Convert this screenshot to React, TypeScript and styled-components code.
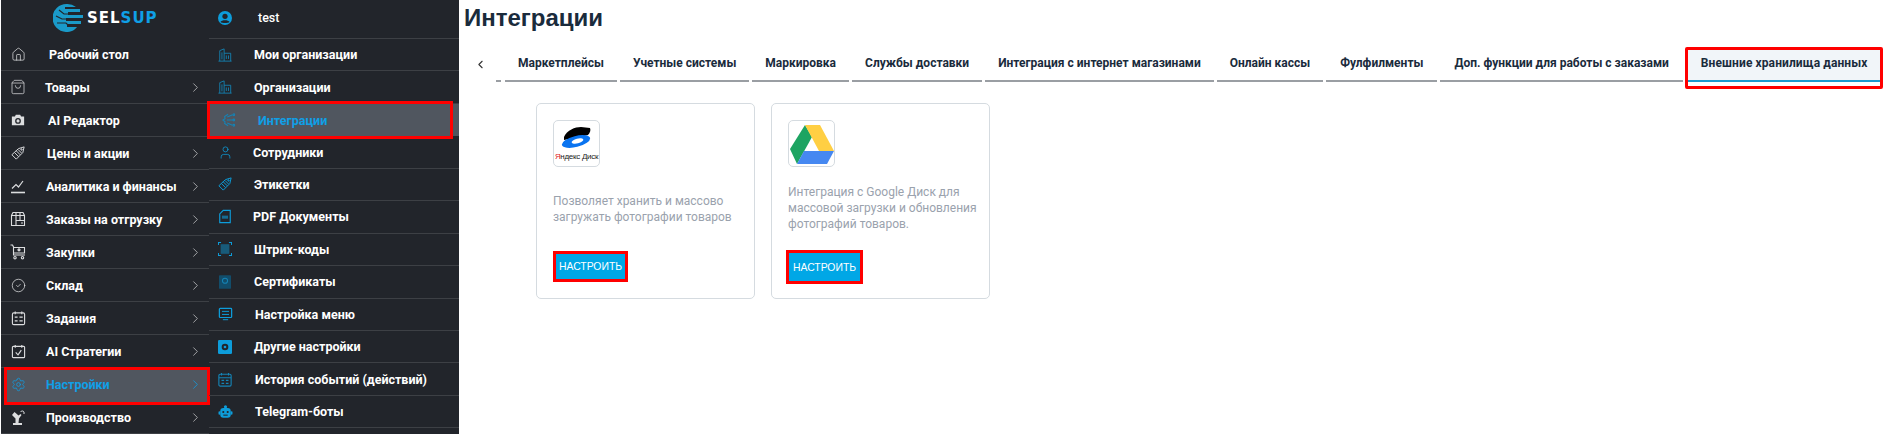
import React from 'react'
import styled, { createGlobalStyle } from 'styled-components'
import { ChevronLeft, ChevronRight, CircleCheck, House, Settings, ShoppingBag, User } from 'lucide-react'

const GlobalStyle = createGlobalStyle`
html, body {
  margin: 0;
  padding: 0;
  background: #fff;
  font-family: "Roboto", "Liberation Sans", sans-serif;
}
* {
  box-sizing: border-box;
}
`

const IconOrders = () => (
  <svg width="16" height="16" viewBox="0 0 16 16" fill="none" stroke="currentColor" strokeWidth="1.1">
    <path d="M3 1.5h10l1.5 3v10h-13v-10z" />
    <path d="M1.5 4.5h13M6 1.5v13M10 1.5v8M6 9.500h8.500" />
    <path d="M11 12h2" />
  </svg>
)
const IconChart = () => (
  <svg width="16" height="16" viewBox="0 0 16 16" fill="none" stroke="currentColor" strokeWidth="1.2">
    <path d="M2 10.500l4-4 2.500 2.500 4.500-6" />
    <path d="M1 14.500h14" strokeWidth="1.600" />
  </svg>
)
const IconCamera = () => (
  <svg width="14" height="14" viewBox="0 0 16 16">
    <path fill="currentColor" d="M1 4h3.500l1-2h5l1 2H15v10H1z" />
    <circle cx="8" cy="9" r="3.300" fill="#22252b" />
    <circle cx="8" cy="9" r="1.800" fill="currentColor" />
  </svg>
)
const IconCart = () => (
  <svg width="16" height="16" viewBox="0 0 16 16" fill="none" stroke="currentColor" strokeWidth="1.1">
    <path d="M0.500 1h2l1 2v8h11.500" />
    <path d="M3.500 3.500h11v5.500h-11M9 3.500v3.500M7.500 5.500L9 7l1.500-1.500" />
    <circle cx="5" cy="13.700" r="1.200" />
    <circle cx="12.500" cy="13.700" r="1.200" />
  </svg>
)
const IconTasks = () => (
  <svg width="15" height="16" viewBox="0 0 16 16" fill="none" stroke="currentColor" strokeWidth="1.2">
    <rect x="1.500" y="2.500" width="13" height="12.500" rx="1.500" />
    <path d="M4.500 1v3M11.500 1v3M4 7h3M9 7h3.500M4 11h3M9 11h3.500" />
  </svg>
)
const IconStrategy = () => (
  <svg width="15" height="15" viewBox="0 0 16 16" fill="none" stroke="currentColor" strokeWidth="1.2">
    <rect x="1.500" y="2.500" width="13" height="12" rx="1" />
    <path d="M4.500 1v3M11.500 1v3M5 9l2.500 2.500L11 6.500" />
  </svg>
)
const IconRobotArm = () => (
  <svg width="16" height="16" viewBox="0 0 16 16">
    <path fill="currentColor" d="M3 14h9v2H3zM5.500 14V9.500L2 6l2.500-3 4 3.500 2-1.500 1 1L9 9.500 8.500 14z" />
    <path fill="none" stroke="currentColor" d="M10.500 3a2 2 0 0 1 3.500 0v2" />
  </svg>
)
const IconUserRound = () => (
  <svg width="14" height="14" viewBox="0 0 16 16">
    <circle cx="8" cy="8" r="8" fill="currentColor" />
    <circle cx="8" cy="6" r="3" fill="#22252b" />
    <path fill="#22252b" d="M2.800 12.500C4 10 12 10 13.200 12.500 11.500 14.200 4.500 14.200 2.800 12.500z" />
  </svg>
)
const IconBuilding = () => (
  <svg width="14" height="14" viewBox="0 0 16 16" fill="none" stroke="#1583b5" strokeWidth="1">
    <path d="M0.500 15h15M2 15V3l5-2v14M7 6h7.500v9M4.500 5v8M9.500 8.500v4M12 8.500v4" />
  </svg>
)
const IconIntegration = () => (
  <svg width="14" height="14" viewBox="0 0 16 16" fill="none" stroke="#1583b5" strokeWidth="1.2">
    <path d="M7 1.500L3 4l.5 2.500L1 8l2.500 2L3 12l4 2.500" />
    <path d="M5.500 8h7M6 4.500l6-2.500M6 11.500l6 2.500" />
    <circle cx="13.500" cy="8" r="1" />
    <circle cx="13.500" cy="2" r="1" />
    <circle cx="13.500" cy="14" r="1" />
  </svg>
)
const IconTag = () => (
  <svg width="14" height="14" viewBox="0 0 16 16" fill="none" stroke="currentColor" strokeWidth="1.1">
    <path d="M1 10l7.500-7L15 1l-1.500 6.500L6 15z" />
    <path d="M4 7.500l4.500 4.500M6 5.500l4.500 4.500M8 4l4 4" />
    <circle cx="12" cy="4" r=".8" />
  </svg>
)
const IconPdf = () => (
  <svg width="14" height="15" viewBox="0 0 16 16" fill="none" stroke="currentColor" strokeWidth="1.300">
    <path d="M6 1h8v14H2V5z" />
    <rect x="4.500" y="7" width="7" height="3.500" fill="currentColor" opacity=".6" stroke="none" />
  </svg>
)
const IconBarcode = () => (
  <svg width="14" height="14" viewBox="0 0 16 16" fill="none" stroke="currentColor" strokeWidth="1.200">
    <path d="M0.500 3.500v-3h3M12.500.5h3v3M15.500 12.500v3h-3M3.500 15.500h-3v-3" />
    <rect x="3" y="2.500" width="10" height="11" fill="currentColor" opacity=".45" stroke="none" />
  </svg>
)
const IconCert = () => (
  <svg width="12" height="14" viewBox="0 0 14 16">
    <rect x="0" y="0" width="14" height="16" rx="1" fill="#124d6b" />
    <circle cx="7" cy="6.500" r="3" fill="none" stroke="#1583b5" strokeWidth="1.200" />
  </svg>
)
const IconMenu = () => (
  <svg width="15" height="14" viewBox="0 0 16 16" fill="none" stroke="currentColor" strokeWidth="1.400">
    <rect x="1" y="1.500" width="14" height="10.500" rx="1" />
    <path d="M5 14.500h6M4 5h8M4 8.500h8" strokeWidth="1.100" />
  </svg>
)
const IconOther = () => (
  <svg width="14" height="14" viewBox="0 0 16 16">
    <rect width="16" height="16" rx="1.500" fill="currentColor" />
    <circle cx="8" cy="8" r="3.800" fill="#22252b" />
    <circle cx="8" cy="8" r="1.500" fill="currentColor" />
  </svg>
)
const IconHistory = () => (
  <svg width="14" height="15" viewBox="0 0 16 16" fill="none" stroke="#1583b5" strokeWidth="1.300">
    <rect x="1" y="2" width="14" height="13.500" rx="1.500" />
    <path d="M4 .5v3M12 .5v3M1 6h14M4 9h3M9 9h3M4 12.500h3M9 12.500h3" />
  </svg>
)
const IconRobot = () => (
  <svg width="15" height="14" viewBox="0 0 16 16">
    <circle cx="8" cy="2" r="1.800" fill="currentColor" />
    <rect x="2" y="3.500" width="12" height="11" rx="3.500" fill="currentColor" />
    <rect x="0" y="7" width="2" height="4" rx="1" fill="currentColor" />
    <rect x="14" y="7" width="2" height="4" rx="1" fill="currentColor" />
    <circle cx="5.500" cy="8" r="1.200" fill="#22252b" />
    <circle cx="10.500" cy="8" r="1.200" fill="#22252b" />
    <rect x="5.500" y="11" width="5" height="1.200" fill="#22252b" />
  </svg>
)

const SelSupGlobe = () => (
  <svg width="30" height="30" viewBox="0 0 30 30" fill="none">
    <path fill="#1a9ac9" d="M14 1a14 14 0 0 0-1 28c5 0 9-2 11-5H14v-3h14v-3H13v-3h17v-3H15V9h12V6H12V4h11a14 14 0 0 0-9-3z" />
    <path stroke="#22252b" strokeWidth="1.200" d="M6 7l5 4h4M3 13l6 3h6M4 20h9l3 3" />
  </svg>
)

const YandexDisk = () => (
  <YandexLogo>
    <svg width="30" height="22" viewBox="0 0 30 22">
      <path fill="#000" d="M3 10C6 3 14 0 20 0l9 1c1 2 0 5-2 7L3 13z" />
      <ellipse cx="15" cy="14.500" rx="14.500" ry="5.500" transform="rotate(-14 15 14.500)" fill="#0a74f0" />
      <ellipse cx="16.500" cy="14" rx="6" ry="2.400" transform="rotate(-14 16.500 14)" fill="#fff" />
    </svg>
    <YandexText>
      <em>Я</em>ндекс Диск
    </YandexText>
  </YandexLogo>
)

const GoogleDrive = () => (
  <svg width="44" height="40" viewBox="0 0 44 40">
    <path fill="#1da462" d="M15 1l7 12L7 40 0 25z" />
    <path fill="#ffcf43" d="M15 1h15l14 26H29z" />
    <path fill="#4688f1" d="M14 27h30l-7 13H7z" />
  </svg>
)

interface IMenuItem {
  icon: React.ReactNode
  label: string
  indent: number
  arrow?: boolean
  active?: boolean
}

const mainMenu: IMenuItem[] = [
  { icon: <House size={15} strokeWidth={1.2} />, label: 'Рабочий стол', indent: 14 },
  { icon: <ShoppingBag size={16} strokeWidth={1.1} />, label: 'Товары', indent: 10, arrow: true },
  { icon: <IconCamera />, label: 'AI Редактор', indent: 13 },
  { icon: <IconTag />, label: 'Цены и акции', indent: 12, arrow: true },
  { icon: <IconChart />, label: 'Аналитика и финансы', indent: 11, arrow: true },
  { icon: <IconOrders />, label: 'Заказы на отгрузку', indent: 11, arrow: true },
  { icon: <IconCart />, label: 'Закупки', indent: 11, arrow: true },
  { icon: <CircleCheck size={15} strokeWidth={1.2} />, label: 'Склад', indent: 11, arrow: true },
  { icon: <IconTasks />, label: 'Задания', indent: 11, arrow: true },
  { icon: <IconStrategy />, label: 'AI Стратегии', indent: 11, arrow: true },
  { icon: <Settings size={15} strokeWidth={1.2} />, label: 'Настройки', indent: 11, arrow: true, active: true },
  { icon: <IconRobotArm />, label: 'Производство', indent: 11, arrow: true },
]

const subMenu: IMenuItem[] = [
  { icon: <IconBuilding />, label: 'Мои организации', indent: 13 },
  { icon: <IconBuilding />, label: 'Организации', indent: 13 },
  { icon: <IconIntegration />, label: 'Интеграции', indent: 17, active: true },
  { icon: <User size={15} strokeWidth={1.2} />, label: 'Сотрудники', indent: 12 },
  { icon: <IconTag />, label: 'Этикетки', indent: 13 },
  { icon: <IconPdf />, label: 'PDF Документы', indent: 12 },
  { icon: <IconBarcode />, label: 'Штрих-коды', indent: 13 },
  { icon: <IconCert />, label: 'Сертификаты', indent: 13 },
  { icon: <IconMenu />, label: 'Настройка меню', indent: 14 },
  { icon: <IconOther />, label: 'Другие настройки', indent: 13 },
  { icon: <IconHistory />, label: 'История событий (действий)', indent: 14 },
  { icon: <IconRobot />, label: 'Telegram-боты', indent: 14 },
]

const tabs = [
  { label: 'Маркетплейсы', pad: 13 },
  { label: 'Учетные системы', pad: 13 },
  { label: 'Маркировка', pad: 13 },
  { label: 'Службы доставки', pad: 13 },
  { label: 'Интеграция с интернет магазинами', pad: 13 },
  { label: 'Онлайн кассы', pad: 13 },
  { label: 'Фулфилменты', pad: 14 },
  { label: 'Доп. функции для работы с заказами', pad: 14 },
]

const App = () => {
  return <Page>
    <GlobalStyle />
    <Sidebar>
      <LogoRow>
        <SelSupGlobe />
        <LogoText>SEL<span>SUP</span></LogoText>
      </LogoRow>
      {mainMenu.map(({ icon, label, indent, arrow, active }) =>
        <MenuRow key={label} $active={active}>
          <IconSlot $active={active}>{icon}</IconSlot>
          <MenuLabel $indent={indent} $active={active}>{label}</MenuLabel>
          {arrow && <MenuArrow $active={active}><ChevronRight size={15} strokeWidth={1.2} /></MenuArrow>}
        </MenuRow>
      )}
    </Sidebar>
    <SubSidebar>
      <UserRow>
        <SubIconSlot><IconUserRound /></SubIconSlot>
        <UserName>test</UserName>
      </UserRow>
      {subMenu.map(({ icon, label, indent, active }) =>
        <SubRow key={label} $active={active}>
          <SubIconSlot $active={active}>{icon}</SubIconSlot>
          <MenuLabel $indent={indent} $active={active}>{label}</MenuLabel>
        </SubRow>
      )}
    </SubSidebar>
    <Main>
      <Title>Интеграции</Title>
      <TabBar>
        <ScrollButton><ChevronLeft size={13} strokeWidth={2} /></ScrollButton>
        <Tabs>
          {tabs.map(({ label, pad }) => <Tab key={label} $pad={pad}>{label}</Tab>)}
          <ActiveTab $pad={14}>Внешние хранилища данных</ActiveTab>
        </Tabs>
      </TabBar>
      <Cards>
        <Card>
          <LogoBox><YandexDisk /></LogoBox>
          <CardText>Позволяет хранить и массово загружать фотографии товаров</CardText>
          <ConfigButton $width={69} $height={25} $left={3} $lift={2}>Настроить</ConfigButton>
        </Card>
        <Card>
          <LogoBox><GoogleDrive /></LogoBox>
          <CardText>Интеграция с Google Диск для массовой загрузки и обновления фотографий товаров.</CardText>
          <ConfigButton $width={71} $height={28} $left={1} $lift={0}>Настроить</ConfigButton>
        </Card>
      </Cards>
    </Main>
  </Page>
}

const Page = styled.div`
display: flex;
width: 1886px;
height: 434px;
overflow: hidden;
background: #fff;
`

const Sidebar = styled.nav`
flex: none;
width: 208px;
margin-left: 1px;
background: #22252b;
`

const LogoRow = styled.div`
display: flex;
align-items: center;
height: 38px;
padding: 0 0 3px 52px;
`

const LogoText = styled.span`
margin-left: 4px;
font-family: "DejaVu Sans", sans-serif;
font-weight: 700;
font-size: 15px;
letter-spacing: 1px;
color: #fff;
span {
  color: #0f9fe6;
}
`

const MenuRow = styled.div<{ $active?: boolean }>`
position: relative;
isolation: isolate;
display: flex;
align-items: center;
height: 33px;
padding-right: 6px;
border-bottom: ${({ $active }) => ($active ? '0' : '1px solid #3d4045')};
${({ $active }) => $active && `
  &::after {
    content: '';
    position: absolute;
    z-index: -1;
    left: 3px;
    right: -1px;
    top: -1px;
    bottom: -4px;
    background: #50565f;
    border: 3px solid #f00;
  }
`}
`

const IconSlot = styled.div<{ $active?: boolean }>`
flex: none;
display: flex;
justify-content: center;
align-items: center;
width: 34px;
color: ${({ $active }) => ($active ? '#0f9fe6' : '#dcdddf')};
`

const MenuLabel = styled.span<{ $indent: number; $active?: boolean }>`
margin-left: ${({ $indent }) => $indent}px;
font-size: 12.5px;
font-weight: 700;
white-space: nowrap;
color: ${({ $active }) => ($active ? '#0f9fe6' : '#fff')};
`

const MenuArrow = styled.span<{ $active?: boolean }>`
display: flex;
margin-left: auto;
color: ${({ $active }) => ($active ? '#0f9fe6' : '#c8c9cb')};
`

const SubSidebar = styled.nav`
flex: none;
width: 250px;
background: #22252b;
`

const UserRow = styled.div`
display: flex;
align-items: center;
height: 39px;
padding-bottom: 3px;
border-bottom: 1px solid #3d4045;
`

const UserName = styled.span`
margin-left: 17px;
font-size: 12.5px;
font-weight: 500;
color: #fff;
`

const SubRow = styled.div<{ $active?: boolean }>`
position: relative;
isolation: isolate;
display: flex;
align-items: center;
height: 32.45px;
color: #0d9ddb;
background: ${({ $active }) => ($active ? '#50565f' : 'transparent')};
border-bottom: ${({ $active }) => ($active ? '0' : '1px solid #3d4045')};
${({ $active }) => $active && `
  &::after {
    content: '';
    position: absolute;
    z-index: -1;
    left: -2px;
    right: 6px;
    top: -3px;
    bottom: -3px;
    border: 3px solid #f00;
  }
`}
`

const SubIconSlot = styled.div<{ $active?: boolean }>`
flex: none;
display: flex;
justify-content: center;
align-items: center;
width: 32px;
padding-left: ${({ $active }) => ($active ? '8px' : '0')};
color: #0d9ddb;
`

const Main = styled.main`
flex: 1;
min-width: 0;
`

const Title = styled.h1`
margin: 0;
padding-left: 5px;
height: 36px;
line-height: 36px;
font-family: "Liberation Sans", sans-serif;
font-size: 24px;
font-weight: 700;
color: #1a2b3c;
`

const TabBar = styled.div`
display: flex;
align-items: stretch;
height: 34px;
margin-top: 12px;
`

const ScrollButton = styled.div`
position: relative;
flex: none;
display: flex;
align-items: center;
justify-content: center;
width: 42px;
padding-bottom: 2px;
color: #333;
&::after {
  content: '';
  position: absolute;
  right: 0;
  bottom: 0;
  width: 5px;
  height: 2px;
  background: #9a9ea3;
}
`

const Tabs = styled.div`
display: flex;
gap: 3px;
margin-left: 4px;
`

const Tab = styled.div<{ $pad: number }>`
display: flex;
align-items: center;
padding: 0 ${({ $pad }) => $pad}px 2px;
border-bottom: 2px solid #9a9ea3;
font-size: 12px;
font-weight: 700;
white-space: nowrap;
color: #1a2b3c;
`

const ActiveTab = styled(Tab)`
position: relative;
z-index: 0;
margin-left: 1px;
letter-spacing: 0.1px;
border-bottom-color: #1a9ad0;
background: #f1f5f9;
&::after {
  content: '';
  position: absolute;
  left: -2px;
  right: -2px;
  top: -1px;
  bottom: -9px;
  border: 3px solid #f00;
  border-radius: 2px;
}
`

const Cards = styled.div`
display: flex;
gap: 16px;
margin-top: 21px;
padding-left: 77px;
`

const Card = styled.section`
display: flex;
flex-direction: column;
width: 219px;
height: 196px;
padding: 16px 12px 17px 16px;
border: 1px solid #d5dbe0;
border-radius: 5px;
`

const LogoBox = styled.div`
flex: none;
display: flex;
align-items: center;
justify-content: center;
width: 47px;
height: 47px;
border: 1px solid #d5dbe0;
border-radius: 5px;
overflow: hidden;
`

const YandexLogo = styled.div`
display: flex;
flex-direction: column;
align-items: center;
gap: 3px;
`

const YandexText = styled.span`
font-family: "Liberation Sans", sans-serif;
font-size: 8px;
line-height: 9px;
letter-spacing: -0.3px;
white-space: nowrap;
color: #222;
em {
  font-style: normal;
  color: #e01b22;
}
`

const CardText = styled.p`
flex: 1;
display: flex;
align-items: center;
margin: 0;
padding-bottom: 4px;
font-size: 12px;
line-height: 16px;
color: #9aa2ad;
`

const ConfigButton = styled.div<{ $width: number; $height: number; $left: number; $lift: number }>`
flex: none;
display: flex;
align-items: center;
justify-content: center;
width: ${({ $width }) => $width}px;
height: ${({ $height }) => $height}px;
margin-left: ${({ $left }) => $left}px;
margin-bottom: ${({ $lift }) => $lift}px;
outline: 3px solid #f00;
background: #00a7e6;
font-family: "Liberation Sans", sans-serif;
font-size: 10.400px;
text-transform: uppercase;
color: #fff;
`

export default App
